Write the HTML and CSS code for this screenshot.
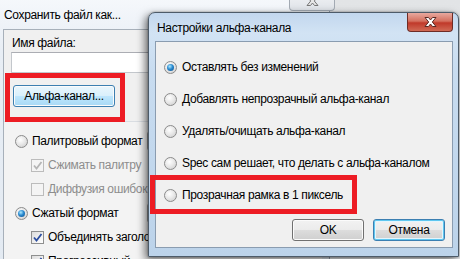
FILE: index.html
```html
<!DOCTYPE html>
<html lang="ru">
<head>
  <meta charset="UTF-8" />
  <title>Настройки альфа-канала</title>
  <link rel="stylesheet" href="styles.css">
</head>
<body>

  <div class="desktop">

    <!-- background window: save dialog -->
    <div class="window back">
      <div class="caption">
        <span class="caption-title">Сохранить файл как...</span>
        <span class="close-btn inactive">
          <svg width="13" height="10" viewBox="0 0 13 10"><polygon points="1,0.5 4.5,0.5 6.5,3 8.5,0.5 12,0.5 8.3,5 12,9.5 8.5,9.5 6.5,7 4.5,9.5 1,9.5 4.7,5" fill="#e6e6e6" stroke="#777" stroke-width="1"/></svg>
        </span>
      </div>
      <div class="client">
        <div class="file-box">
          <div class="field-label">Имя файла:</div>
          <div class="text-input"></div>
          <button class="btn hot">Альфа-канал...</button>
        </div>
        <div class="group">
          <div class="opt">
            <span class="radio"></span>
            <span class="opt-text">Палитровый формат</span>
            <span class="side-btn"></span>
          </div>
          <div class="opt sub disabled">
            <span class="check on">
              <svg width="11" height="11" viewBox="0 0 11 11"><path d="M2 5.5 L4.5 8.5 L9.5 2" fill="none" stroke="#b5b5b5" stroke-width="1.8"/></svg>
            </span>
            <span class="opt-text">Сжимать палитру</span>
          </div>
          <div class="opt sub disabled">
            <span class="check"></span>
            <span class="opt-text">Диффузия ошибок</span>
          </div>
          <div class="opt">
            <span class="radio on"></span>
            <span class="opt-text">Сжатый формат</span>
            <span class="side-btn"></span>
          </div>
          <div class="opt sub">
            <span class="check on">
              <svg width="11" height="11" viewBox="0 0 11 11"><path d="M2 5.5 L4.5 8.5 L9.5 2" fill="none" stroke="#2c4ea0" stroke-width="1.8"/></svg>
            </span>
            <span class="opt-text">Объединять заголовки</span>
          </div>
          <div class="opt sub">
            <span class="check on">
              <svg width="11" height="11" viewBox="0 0 11 11"><path d="M2 5.5 L4.5 8.5 L9.5 2" fill="none" stroke="#2c4ea0" stroke-width="1.8"/></svg>
            </span>
            <span class="opt-text">Прогрессивный</span>
          </div>
        </div>
      </div>
    </div>

    <!-- foreground dialog -->
    <div class="window dialog">
      <div class="caption">
        <span class="caption-title">Настройки альфа-канала</span>
        <span class="close-btn active">
          <svg width="13" height="10" viewBox="0 0 13 10"><polygon points="1,0.5 4.5,0.5 6.5,3 8.5,0.5 12,0.5 8.3,5 12,9.5 8.5,9.5 6.5,7 4.5,9.5 1,9.5 4.7,5" fill="#fff" stroke="#5a2a24" stroke-width="1"/></svg>
        </span>
      </div>
      <div class="client">
        <div class="choices">
          <div class="choice"><span class="radio on"></span><span>Оставлять без изменений</span></div>
          <div class="choice"><span class="radio"></span><span>Добавлять непрозрачный альфа-канал</span></div>
          <div class="choice"><span class="radio"></span><span>Удалять/очищать альфа-канал</span></div>
          <div class="choice"><span class="radio"></span><span>Spec сам решает, что делать с альфа-каналом</span></div>
          <div class="choice"><span class="radio"></span><span>Прозрачная рамка в 1 пиксель</span></div>
        </div>
        <div class="actions">
          <button class="btn">OK</button>
          <button class="btn focus">Отмена</button>
        </div>
      </div>
    </div>

    <!-- red highlight frames drawn over the screenshot -->
    <div class="mark mark-alpha"></div>
    <div class="mark mark-pixel"></div>

  </div>

</body>
</html>
```

FILE: styles.css
```css
* {
  box-sizing: border-box;
}

body {
  margin: 0;
  font-family: "Liberation Sans", Arial, sans-serif;
  font-size: 12px;
  letter-spacing: -0.35px;
  color: #000;
  background-color: #e9ecef;
}

.desktop {
  position: relative;
  width: 460px;
  height: 259px;
  overflow: hidden;
  background: linear-gradient(#e2e4e6, #eef0f2);
}

.window {
  position: absolute;
  display: flex;
  flex-direction: column;
  border-radius: 7px 7px 0 0;
}

.caption {
  position: relative;
  flex: none;
  line-height: 16px;
  white-space: nowrap;
}

.close-btn {
  position: absolute;
  top: 0;
  width: 46px;
  height: 19px;
  border-radius: 0 0 4px 4px;
  display: flex;
  align-items: center;
  justify-content: center;
}

/* background window */

.back {
  left: -5px;
  top: -10px;
  width: 335px;
  height: 290px;
  padding: 0 7px;
  border: 1px solid #97a4b2;
  background: linear-gradient(#f7f9fc, #e8eef5 60px, #e3eaf2);
}

.back .caption {
  height: 38px;
  padding: 16px 0 0 1px;
}

.close-btn.inactive {
  left: 286px;
  height: 20px;
  border: 1px solid #a3aab3;
  border-top: none;
  background: linear-gradient(#f4f5f7, #dfe3e8);
}

.back .client {
  flex: 1;
  background-color: #f0f0f0;
  border-top: 1px solid #a7b0ba;
  border-left: 1px solid #a7b0ba;
}

.file-box {
  display: flex;
  flex-direction: column;
  align-items: flex-start;
  padding: 0 0 0 8px;
}

.field-label {
  margin-top: 5px;
  line-height: 16px;
}

.text-input {
  margin: 1px 0 0 -1px;
  width: 320px;
  height: 21px;
  background: #fff;
  border: 1px solid #c3c7cc;
  border-top-color: #abadb3;
}

.group {
  margin-top: 14px;
  padding: 7px 0 0 11px;
  border-top: 1px solid #d9dde2;
  background-color: #f3f3f3;
  flex: 1;
}

.opt {
  display: flex;
  align-items: center;
  height: 24px;
  gap: 4px;
  white-space: nowrap;
}

.opt.sub {
  padding-left: 16px;
}

.opt-text {
  width: 107px;
}

.opt.sub .opt-text {
  width: auto;
}

.opt.disabled {
  color: #8d8d8d;
}

.side-btn {
  flex: none;
  width: 18px;
  height: 20px;
  margin-left: 4px;
  border: 1px solid #a0a0a0;
  border-radius: 3px;
  background: linear-gradient(#f2f2f2, #dcdcdc);
}

/* foreground dialog */

.dialog {
  left: 148px;
  top: 12px;
  width: 311px;
  height: 245px;
  padding: 0 5px 8px 6px;
  border: 1px solid #4d5b69;
  background: linear-gradient(#c2d7ee, #d2e3f4 20px, #c8dcf0 60px, #bcd3ea);
  box-shadow: -3px 3px 8px rgba(0, 0, 0, 0.55), 0 0 2px rgba(0, 0, 0, 0.4);
}

.dialog .caption {
  height: 28px;
  padding: 7px 0 0 2px;
}

.close-btn.active {
  left: 252px;
  border: 1px solid #6e2c26;
  border-top: none;
  background: linear-gradient(#e8a99f, #d4705f 45%, #c0392a 55%, #d06a55);
}

.dialog .client {
  flex: 1;
  display: flex;
  flex-direction: column;
  background-color: #f0f0f0;
  border: 1px solid #8a9cb0;
}

.choices {
  padding: 9px 0 0 8px;
}

.choice {
  display: flex;
  align-items: center;
  gap: 5px;
  height: 32px;
  white-space: nowrap;
}

.actions {
  display: flex;
  justify-content: flex-end;
  gap: 9px;
  margin-top: 8px;
  padding-right: 7px;
}

.actions .btn {
  width: 72px;
}

/* controls */

.radio {
  position: relative;
  flex: none;
  width: 13px;
  height: 13px;
  border-radius: 50%;
  border: 1px solid #8b8b8b;
  background: radial-gradient(circle at 40% 35%, #ffffff 0, #e9e9e9 45%, #c9c9c9 100%);
}

.radio.on::after {
  content: "";
  position: absolute;
  left: 2px;
  top: 2px;
  width: 7px;
  height: 7px;
  border-radius: 50%;
  background: radial-gradient(circle at 40% 35%, #aeeaff 0, #2a8ad0 45%, #0b4a84 100%);
}

.check {
  flex: none;
  width: 13px;
  height: 13px;
  border: 1px solid #8e8f8f;
  background: linear-gradient(135deg, #dcdcdc, #ffffff);
  display: flex;
  align-items: center;
  justify-content: center;
}

.disabled .check {
  border-color: #bcbcbc;
  background: #f4f4f4;
}

.btn {
  height: 22px;
  padding: 0 6px;
  font-family: inherit;
  font-size: 12px;
  letter-spacing: inherit;
  color: #000;
  border: 1px solid #707070;
  border-radius: 3px;
  background: linear-gradient(#f2f2f2 0, #ebebeb 50%, #dddddd 51%, #cfcfcf 100%);
  box-shadow: inset 0 0 0 1px #fbfbfb;
}

.btn.hot {
  margin: 12px 0 0 1px;
  width: 102px;
  border-color: #3c7fb1;
  background: linear-gradient(#eaf6fd 0, #d9f0fc 50%, #bee6fd 51%, #a7d9f5 100%);
}

.btn.focus {
  border-color: #3c7fb1;
  box-shadow: inset 0 0 0 1px #5fc7f0, inset 0 0 0 2px #e4f5fc;
}

/* red highlight frames */

.mark {
  position: absolute;
  border: 5px solid #ed1c24;
}

.mark-alpha {
  left: 5px;
  top: 73px;
  width: 120px;
  height: 49px;
}

.mark-pixel {
  left: 150px;
  top: 175px;
  width: 207px;
  height: 39px;
}
```
